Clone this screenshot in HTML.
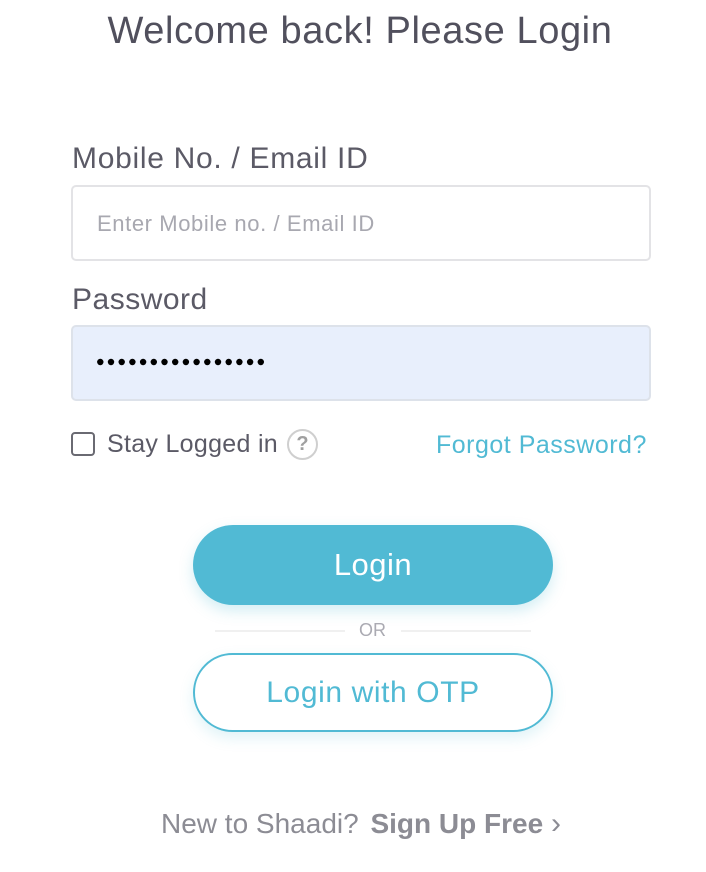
<!DOCTYPE html>
<html><head><style>
*{box-sizing:border-box;margin:0;padding:0}
body{width:706px;height:872px;background:#fff;font-family:"Liberation Sans",Arial,sans-serif;position:relative;overflow:hidden}
.a{position:absolute;white-space:nowrap}
</style></head><body>
<div class="a" style="left:0;width:720px;text-align:center;top:10px;font-size:38px;letter-spacing:0.6px;color:#51505d">Welcome back! Please Login</div>
<div class="a" style="left:72px;top:142px;font-size:30px;letter-spacing:0.7px;color:#5b5a66">Mobile No. / Email ID</div>
<div class="a" style="left:71px;top:185px;width:580px;height:76px;border:2px solid #e3e3e6;border-radius:5px"></div>
<div class="a" style="left:97px;top:211px;font-size:22px;letter-spacing:0.6px;color:#a8a8b0">Enter Mobile no. / Email ID</div>
<div class="a" style="left:72px;top:283px;font-size:30px;letter-spacing:0.5px;color:#5b5a66">Password</div>
<div class="a" style="left:71px;top:325px;width:580px;height:76px;background:#e8effc;border:2px solid #dde2ea;border-radius:5px"></div>
<svg class="a" style="left:97px;top:357px" width="180" height="10">
<g fill="#000">
<circle cx="3.3" cy="5" r="3.2"/><circle cx="14" cy="5" r="3.2"/><circle cx="24.7" cy="5" r="3.2"/><circle cx="35.4" cy="5" r="3.2"/><circle cx="46.1" cy="5" r="3.2"/><circle cx="56.8" cy="5" r="3.2"/><circle cx="67.5" cy="5" r="3.2"/><circle cx="78.2" cy="5" r="3.2"/><circle cx="88.9" cy="5" r="3.2"/><circle cx="99.6" cy="5" r="3.2"/><circle cx="110.3" cy="5" r="3.2"/><circle cx="121" cy="5" r="3.2"/><circle cx="131.7" cy="5" r="3.2"/><circle cx="142.4" cy="5" r="3.2"/><circle cx="153.1" cy="5" r="3.2"/><circle cx="163.8" cy="5" r="3.2"/>
</g></svg>
<div class="a" style="left:71px;top:432px;width:24px;height:24px;border:2px solid #6a6a72;border-radius:4px"></div>
<div class="a" style="left:107px;top:430px;font-size:25px;letter-spacing:0.3px;color:#5b5a66">Stay Logged in</div>
<div class="a" style="left:287px;top:429px;width:31px;height:31px;border:2px solid #cfcfcf;border-radius:50%;text-align:center;font-size:20px;line-height:27px;color:#a0a0a0;font-weight:bold">?</div>
<div class="a" style="left:436px;top:431px;font-size:25px;letter-spacing:0.5px;color:#51bad4">Forgot Password?</div>
<div class="a" style="left:193px;top:525px;width:360px;height:80px;background:#51bad4;border-radius:40px;box-shadow:0 6px 14px rgba(81,186,212,.25);text-align:center;line-height:80px;font-size:31px;letter-spacing:0.5px;color:#fff">Login</div>
<div class="a" style="left:215px;top:630px;width:130px;height:2px;background:#f0f0f0"></div>
<div class="a" style="left:401px;top:630px;width:130px;height:2px;background:#f0f0f0"></div>
<div class="a" style="left:359px;top:620px;font-size:18px;color:#aaaab2">OR</div>
<div class="a" style="left:193px;top:653px;width:360px;height:79px;border:2px solid #51bad4;border-radius:40px;box-shadow:0 6px 14px rgba(81,186,212,.18);text-align:center;line-height:75px;font-size:30px;letter-spacing:0.6px;color:#51bad4">Login with OTP</div>
<div class="a" style="left:161px;top:807px;font-size:28px;color:#8c8c94">New to Shaadi? <b style="margin-left:4px">Sign Up Free</b> <span style="font-size:30px">›</span></div>
</body></html>
